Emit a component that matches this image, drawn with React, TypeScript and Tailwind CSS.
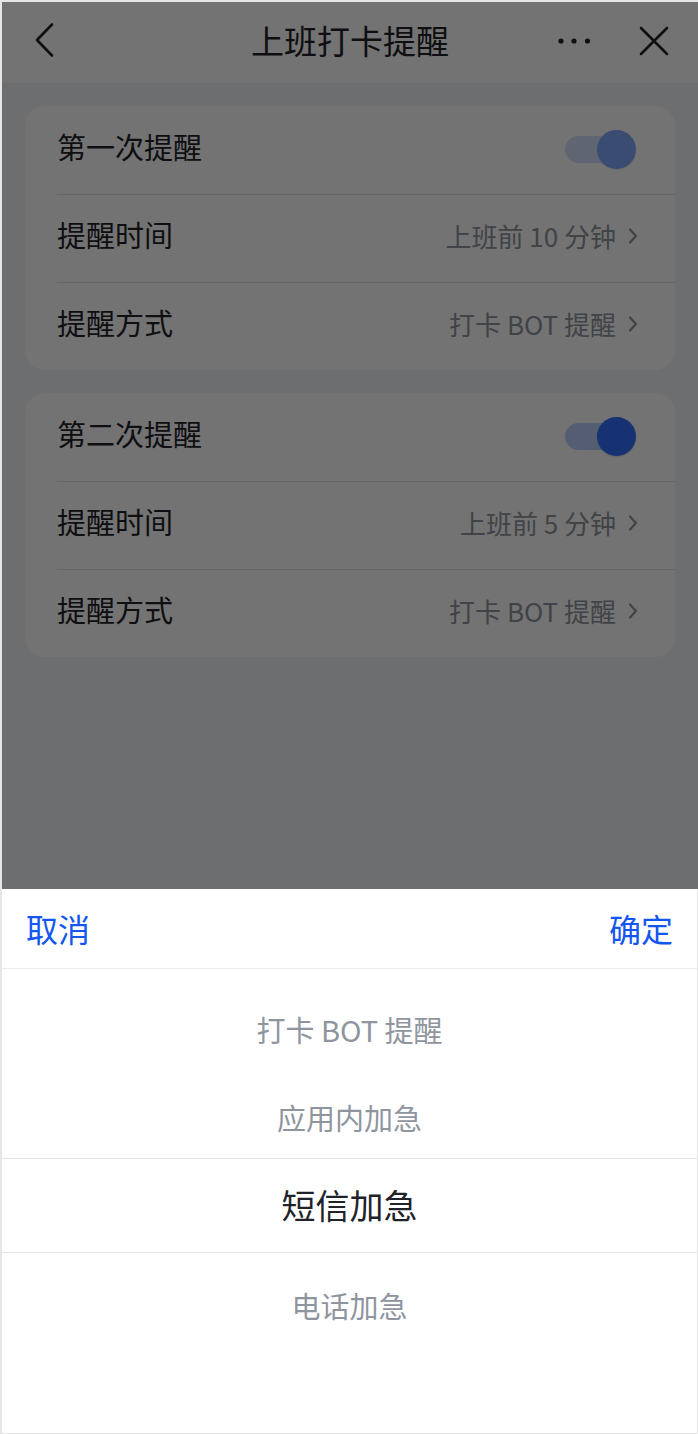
import React from "react";

function Chevron() {
  return (
    <svg width="10" height="16" viewBox="0 0 10 16" className="shrink-0">
      <path d="M2 1.5 L8 8 L2 14.5" fill="none" stroke="#8f959e" strokeWidth="2.2" strokeLinecap="round" strokeLinejoin="round" />
    </svg>
  );
}

function Toggle({ dim }: { dim?: boolean }) {
  return (
    <div className={"relative w-[71px] h-[39px] -mt-[2px] " + (dim ? "opacity-60" : "")}>
      <div className="absolute left-0 top-[6px] w-[64px] h-[27px] rounded-full bg-[#bacefd]" />
      <div className="absolute right-0 top-0 w-[39px] h-[39px] rounded-full bg-[#3370ff] shadow-[0_1px_2px_rgba(0,0,0,0.15)]" />
    </div>
  );
}

function Card({ title, time, dim }: { title: string; time: string; dim?: boolean }) {
  return (
    <div className="bg-white rounded-[20px] overflow-hidden">
      <div className="h-[88px] flex items-center justify-between pl-[32px] pr-[39px]">
        <span className="text-[29px] text-[#1f2329] mb-[7px]">{title}</span>
        <Toggle dim={dim} />
      </div>
      <div className="ml-[32px] border-t border-[#dee0e3] h-[88px] flex items-center justify-between pr-[37px]">
        <span className="text-[29px] text-[#1f2329] mb-[7px]">提醒时间</span>
        <div className="flex items-center gap-[12px] mb-[6px]">
          <span className="text-[26px] text-[#8f959e]">{time}</span>
          <Chevron />
        </div>
      </div>
      <div className="ml-[32px] border-t border-[#dee0e3] h-[88px] flex items-center justify-between pr-[37px]">
        <span className="text-[29px] text-[#1f2329] mb-[7px]">提醒方式</span>
        <div className="flex items-center gap-[12px] mb-[6px]">
          <span className="text-[26px] text-[#8f959e]">打卡 BOT 提醒</span>
          <Chevron />
        </div>
      </div>
    </div>
  );
}

export default function App() {
  return (
    <div className="w-[698px] h-[1434px] border-l-2 border-t-2 border-[#e6e6e6] font-['Noto_Sans_CJK_SC','Noto_Sans',sans-serif] overflow-hidden">
      <div className="relative w-full h-full bg-[#f2f3f5]">
        {/* header */}
        <div className="h-[81px] bg-white grid grid-cols-[1fr_auto_1fr] items-center pb-[3px]">
          <div className="flex items-center pl-[29px]">
            <svg width="24" height="40" viewBox="0 0 24 40">
              <path d="M21 3.5 L6 19 L21 34.5" fill="none" stroke="#1f2329" strokeWidth="2.6" strokeLinecap="round" strokeLinejoin="round" />
            </svg>
          </div>
          <div className="text-[33px] text-[#1f2329] leading-none mb-[2px]">上班打卡提醒</div>
          <div className="flex items-center justify-end pr-[29px] gap-[48px]">
            <svg width="34" height="8" viewBox="0 0 34 8">
              <circle cx="4" cy="4" r="2.6" fill="#1f2329" />
              <circle cx="17" cy="4" r="2.6" fill="#1f2329" />
              <circle cx="30.5" cy="4" r="2.6" fill="#1f2329" />
            </svg>
            <svg width="30" height="30" viewBox="0 0 30 30">
              <path d="M2 2 L28 28 M28 2 L2 28" fill="none" stroke="#1f2329" strokeWidth="2.6" strokeLinecap="round" />
            </svg>
          </div>
        </div>

        {/* content */}
        <div className="px-[23px] pt-[23px] flex flex-col gap-[23px]">
          <Card title="第一次提醒" time="上班前 10 分钟" dim />
          <Card title="第二次提醒" time="上班前 5 分钟" />
        </div>

        {/* mask */}
        <div className="absolute inset-0 bg-[rgba(0,0,0,0.55)]" />

        {/* bottom sheet */}
        <div className="absolute left-0 right-0 bottom-0 h-[545px] bg-white border-r border-b border-[#e6e6e6] flex flex-col">
          <div className="h-[80px] shrink-0 border-b border-[#ebebeb] flex items-center justify-between px-[24px]">
            <span className="text-[32px] text-[#1456f0] mb-[2px]">取消</span>
            <span className="text-[32px] text-[#1456f0] mb-[2px]">确定</span>
          </div>
          <div className="pt-[17px] flex flex-col">
            <div className="h-[88px] flex items-center justify-center text-[29px] text-[#8f959e]">打卡 BOT 提醒</div>
            <div className="h-[84px] pt-[4px] flex items-center justify-center text-[29px] text-[#8f959e]">应用内加急</div>
            <div className="h-[95px] border-t border-b border-[#e5e6eb] flex items-center justify-center text-[34px] text-[#1f2329] pb-[2px]">短信加急</div>
            <div className="h-[106px] flex items-center justify-center text-[29px] text-[#8f959e]">电话加急</div>
          </div>
        </div>
      </div>
    </div>
  );
}
